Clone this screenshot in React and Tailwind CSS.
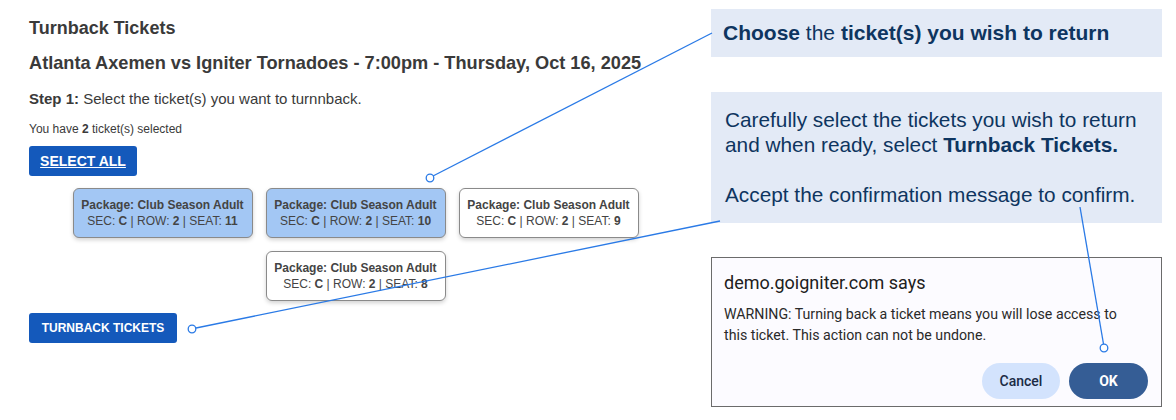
import React from 'react';

const tickets = [
  { seat: 11, selected: true },
  { seat: 10, selected: true },
  { seat: 9, selected: false },
  { seat: 8, selected: false },
];

function TicketCard({ seat, selected }) {
  return (
    <div
      className={`w-[180px] h-[50px] rounded-[6px] border border-[#8a8a8a] shadow-[0_2px_4px_rgba(0,0,0,0.18)] flex flex-col items-center justify-center text-[12px] leading-[16px] text-[#444] ${
        selected ? 'bg-[#a3c7f4]' : 'bg-white'
      }`}
    >
      <span className="font-bold">Package: Club Season Adult</span>
      <span>
        SEC: <b>C</b> | ROW: <b>2</b> | SEAT: <b>{seat}</b>
      </span>
    </div>
  );
}

function Connectors() {
  const blue = '#2a7ae6';
  return (
    <svg className="absolute inset-0 pointer-events-none" width="1176" height="420">
      <line x1="433" y1="176" x2="712" y2="33" stroke={blue} strokeWidth="1.3" />
      <circle cx="430" cy="178" r="3.8" fill="white" stroke={blue} strokeWidth="1.3" />
      <line x1="196" y1="328" x2="720" y2="221" stroke={blue} strokeWidth="1.3" />
      <circle cx="192" cy="329" r="3.8" fill="white" stroke={blue} strokeWidth="1.3" />
      <line x1="1080" y1="207" x2="1103.5" y2="344" stroke={blue} strokeWidth="1.3" />
      <circle cx="1104" cy="348" r="3.8" fill="white" stroke={blue} strokeWidth="1.3" />
    </svg>
  );
}

export default function App() {
  return (
    <div className="relative w-[1176px] h-[420px] bg-white overflow-hidden flex font-['Liberation_Sans',Arial,sans-serif]">
      {/* page */}
      <div className="w-[682px] pl-[29px] pt-[18px] text-[#3a3a3a]">
        <h1 className="text-[18px] leading-[20px] font-bold">Turnback Tickets</h1>
        <h2 className="mt-[13px] text-[18.2px] leading-[24px] font-bold whitespace-nowrap">
          Atlanta Axemen vs Igniter Tornadoes - 7:00pm - Thursday, Oct 16, 2025
        </h2>
        <p className="mt-[15px] text-[15px] leading-[18px]">
          <b>Step 1:</b> Select the ticket(s) you want to turnnback.
        </p>
        <p className="mt-[13px] text-[12px] leading-[16px]">
          You have <b>2</b> ticket(s) selected
        </p>
        <button className="mt-[9px] h-[30px] w-[108px] rounded-[3px] bg-[#1459bb] text-white text-[14px] font-bold underline">
          SELECT ALL
        </button>
        <div className="mt-[12px] flex flex-wrap justify-center gap-[13px] w-[653px]">
          {tickets.map((t) => (
            <TicketCard key={t.seat} {...t} />
          ))}
        </div>
        <button className="mt-[12px] h-[30px] w-[148px] rounded-[3px] bg-[#1459bb] text-white text-[12px] font-bold">
          TURNBACK TICKETS
        </button>
      </div>

      {/* callouts */}
      <div className="w-[451px] ml-[29px] pt-[9px] flex flex-col">
        <div className="h-[48px] bg-[#e3eaf6] pl-[12px] flex items-center text-[21px] text-[#0e3560]">
          <span>
            <b>Choose</b> the <b>ticket(s) you wish to return</b>
          </span>
        </div>
        <div className="mt-[35px] h-[131px] bg-[#e3eaf6] pl-[14px] pt-[15px] text-[20.8px] leading-[25px] text-[#0e3560] whitespace-nowrap">
          <p>Carefully select the tickets you wish to return</p>
          <p>
            and when ready, select <b>Turnback Tickets.</b>
          </p>
          <p className="mt-[25px]">Accept the confirmation message to confirm.</p>
        </div>
        <div className="mt-[34px] h-[150px] border-[1.5px] border-[#6b6b6b] bg-[#fcfbff] pl-[12px] pr-[13px] pt-[14px] font-['Roboto',sans-serif] text-[#202020]">
          <div className="text-[18px] leading-[22px] font-normal">demo.goigniter.com says</div>
          <p className="mt-[10px] text-[14.2px] leading-[21px] text-[#2a2a2a] whitespace-nowrap">
            WARNING: Turning back a ticket means you will lose access to
            <br />
            this ticket. This action can not be undone.
          </p>
          <div className="mt-[17px] flex justify-end gap-[9px]">
            <button className="h-[36px] w-[78px] rounded-full bg-[#d3e3fd] text-[#1b2b45] text-[14px] font-medium">
              Cancel
            </button>
            <button className="h-[36px] w-[79px] rounded-full bg-[#355d95] text-white text-[14px] font-bold">
              OK
            </button>
          </div>
        </div>
      </div>

      <Connectors />
    </div>
  );
}
